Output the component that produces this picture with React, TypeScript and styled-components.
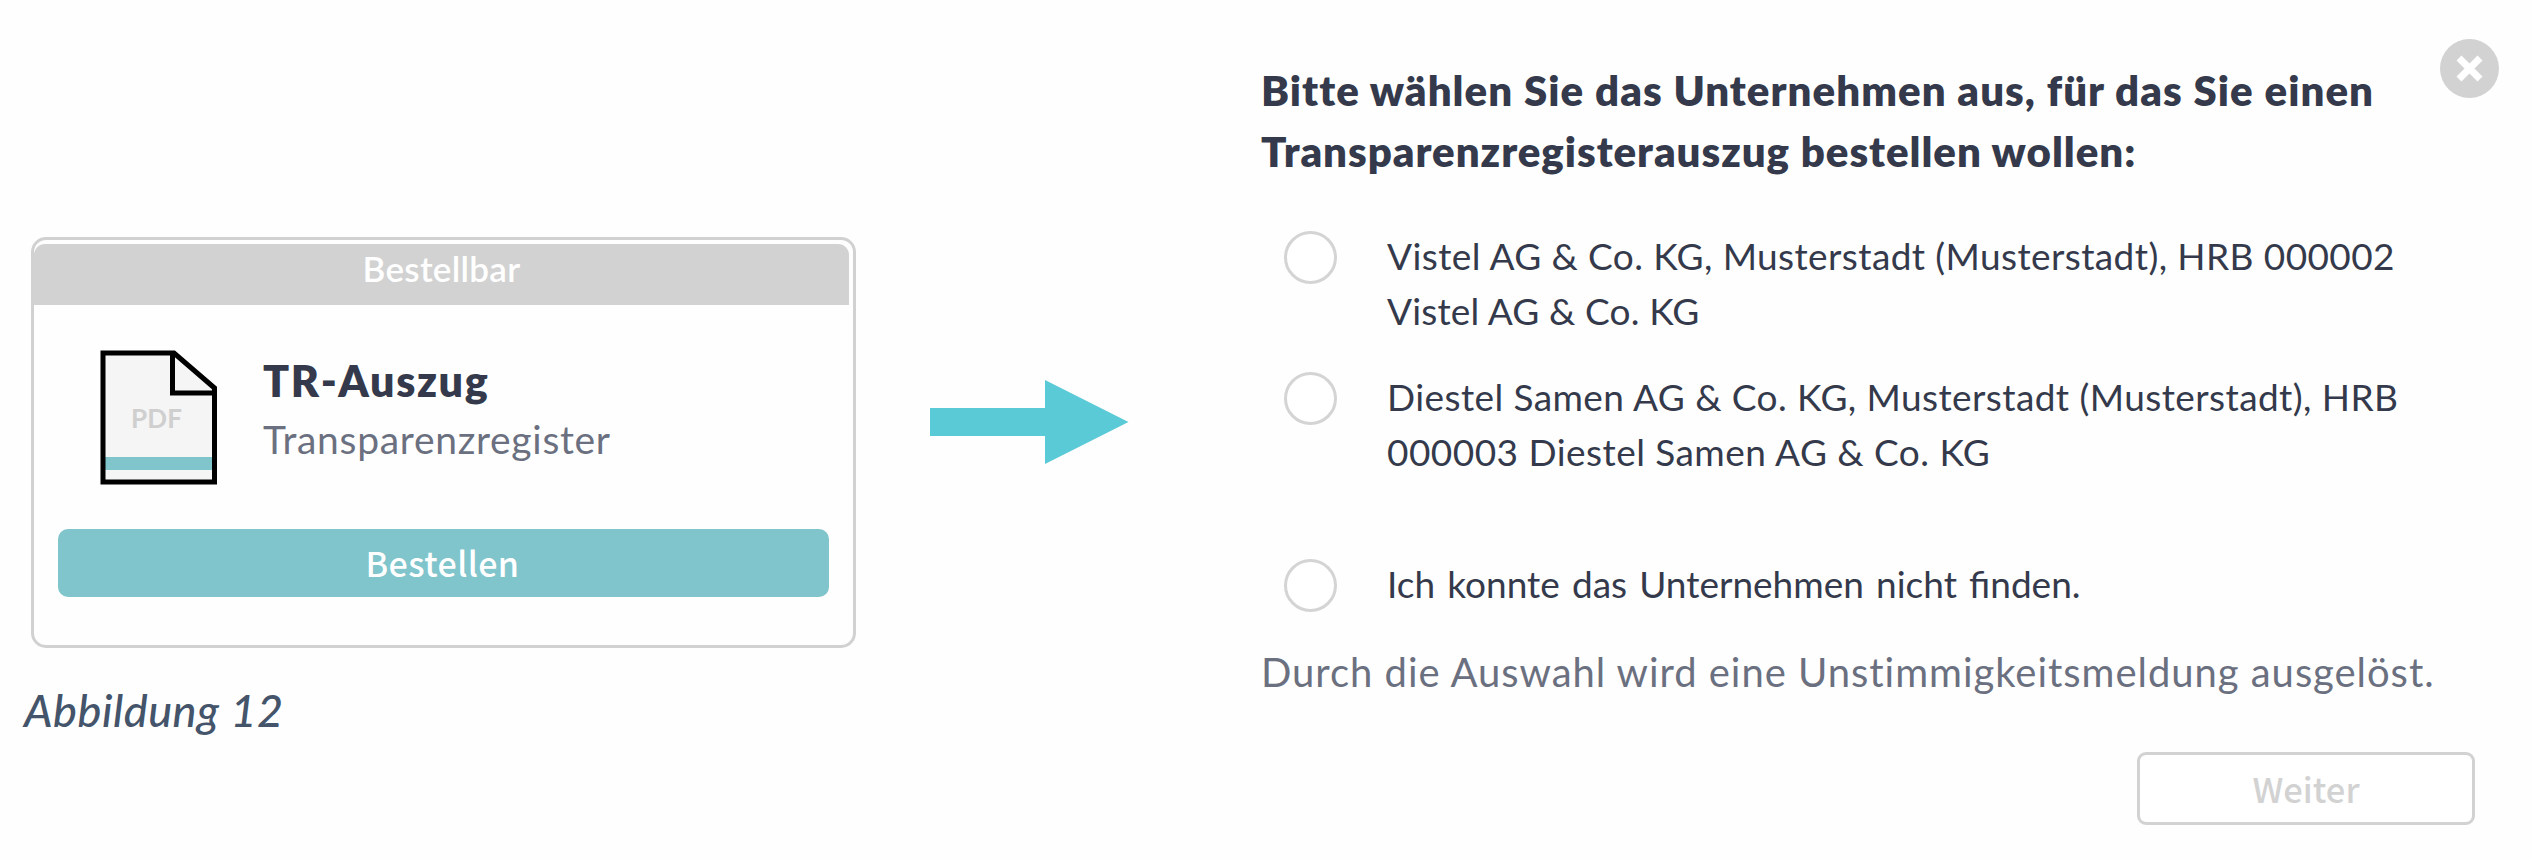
import React from 'react';
import styled, { createGlobalStyle } from 'styled-components';

const GlobalStyle = createGlobalStyle`
  *, *::before, *::after { box-sizing: border-box; }
  body { margin: 0; background: #fefefe; font-family: Lato, "Noto Sans", sans-serif; color: #343a4b; }
  h1, h2, p { margin: 0; font-weight: 400; }
  button { padding: 0; font: inherit; cursor: pointer; }
`;

const Page = styled.main`
  display: flex;
  width: 2532px;
  height: 860px;
  overflow: hidden;
`;

const Figure = styled.section`
  width: 930px;
  padding: 236.5px 0 0 31px;
`;

const Card = styled.article`
  width: 825px;
  height: 411px;
  border: 3px solid #d1d1d1;
  border-radius: 15px;
  padding: 4px 4px 0 0;
`;

const Status = styled.div`
  height: 61px;
  border-radius: 11px 11px 0 0;
  background: #d2d2d2;
  color: #fff;
  font-size: 35px;
  font-weight: 600;
  line-height: 49px;
  letter-spacing: 0.3px;
  text-align: center;
`;

const Product = styled.div`
  display: flex;
  gap: 45px;
  padding: 45px 0 0 66px;
  height: 224px;
`;

const ProductText = styled.div`
  padding-top: 6px;
`;

const ProductName = styled.h2`
  font-size: 43px;
  font-weight: 800;
  line-height: 50px;
  letter-spacing: 1.6px;
`;

const ProductKind = styled.p`
  padding-top: 8px;
  color: #6b7080;
  font-size: 39px;
  line-height: 51px;
  letter-spacing: 0.7px;
`;

const OrderButton = styled.button`
  display: block;
  width: 771px;
  height: 68px;
  margin-left: 24px;
  padding-right: 2px;
  border: 0;
  border-radius: 10px;
  background: #80c4cc;
  color: #fff;
  font-family: "Noto Sans CJK JP", sans-serif;
  font-size: 34px;
  font-weight: 500;
  line-height: 68px;
  letter-spacing: 0.4px;
`;

const Caption = styled.p`
  margin: 36px 0 0 -7px;
  color: #44546a;
  font-size: 45px;
  font-style: italic;
  font-weight: 500;
  line-height: 52px;
  letter-spacing: 0.5px;
`;

const ArrowSlot = styled.div`
  width: 331px;
  padding-top: 380px;
`;

const Dialog = styled.section`
  position: relative;
  width: 1271px;
  padding-top: 59.6px;
`;

const Title = styled.h1`
  font-size: 42px;
  font-weight: 800;
  line-height: 61.3px;
`;

const Line = styled.span<{ $spacing: number; $wordSpacing?: number }>`
  display: block;
  letter-spacing: ${p => p.$spacing}px;
  word-spacing: ${p => p.$wordSpacing ?? 0}px;
  white-space: nowrap;
`;

const CloseButton = styled.button`
  position: absolute;
  top: 38.5px;
  left: 1179px;
  display: grid;
  place-items: center;
  width: 59px;
  height: 59px;
  border: 0;
  border-radius: 50%;
  background: #d2d2d2;
`;

const Options = styled.div`
  padding: 45px 0 0 23px;
`;

const Option = styled.label<{ $height: number }>`
  display: flex;
  gap: 50px;
  height: ${p => p.$height}px;
`;

const Radio = styled.input`
  appearance: none;
  flex: none;
  width: 53px;
  height: 53px;
  margin: 4px 0 0;
  border: 3px solid #d4d4d4;
  border-radius: 50%;
  background: #fff;
`;

const OptionText = styled.span`
  padding-top: 0.5px;
  font-size: 37px;
  line-height: 55.6px;
`;

const Note = styled.p`
  padding-top: 3px;
  color: #6b7080;
  font-size: 40px;
  line-height: 57px;
`;

const NextButton = styled.button`
  display: block;
  width: 338px;
  height: 73px;
  margin: 50.5px 0 0 876px;
  border: 3px solid #d2d2d2;
  border-radius: 9px;
  background: #fff;
  color: #d2d2d2;
  font-family: "Noto Sans CJK JP", sans-serif;
  font-size: 34.5px;
  font-weight: 500;
  line-height: 67px;
`;

const PdfIcon = () => (
  <svg width="118" height="136" viewBox="0 0 118 136">
    <path d="M3 3H74L114.5 38V132H3Z" fill="#f5f5f5" />
    <path d="M3 107H114V120H3Z" fill="#80c4cc" />
    <path d="M3 3H74L114.5 38V132H3Z M72.500 3V43H114" fill="none" stroke="#000" strokeWidth="5" />
    <text x="31" y="77.500" fill="#cfcfcf" fontFamily="Lato" fontWeight="700" fontSize="26" textLength="51">PDF</text>
  </svg>
);

const Arrow = () => (
  <svg width="199" height="84" viewBox="0 0 199 84" fill="#5bcad7">
    <path d="M0 28H115V0L198.500 42L115 84V56H0Z" />
  </svg>
);

const Cross = () => (
  <svg width="27" height="27" viewBox="0 0 27 27" stroke="#fff" strokeWidth="7">
    <path d="M3 3L24 24M24 3L3 24" />
  </svg>
);

const options = [
  {
    height: 141,
    lines: [
      { text: 'Vistel AG & Co. KG, Musterstadt (Musterstadt), HRB 000002', spacing: 0.4 },
      { text: 'Vistel AG & Co. KG', spacing: 0.15 },
    ],
  },
  {
    height: 187,
    lines: [
      { text: 'Diestel Samen AG & Co. KG, Musterstadt (Musterstadt), HRB', spacing: 0.42 },
      { text: '000003 Diestel Samen AG & Co. KG', spacing: 0.46 },
    ],
  },
  { height: 86, lines: [{ text: 'Ich konnte das Unternehmen nicht finden.', spacing: 0, wordSpacing: 2.7 }] },
];

export default function App() {
  return (
    <Page>
      <GlobalStyle />
      <Figure>
        <Card>
          <Status>Bestellbar</Status>
          <Product>
            <PdfIcon />
            <ProductText>
              <ProductName>TR-Auszug</ProductName>
              <ProductKind>Transparenzregister</ProductKind>
            </ProductText>
          </Product>
          <OrderButton>Bestellen</OrderButton>
        </Card>
        <Caption>Abbildung 12</Caption>
      </Figure>
      <ArrowSlot>
        <Arrow />
      </ArrowSlot>
      <Dialog>
        <Title>
          <Line $spacing={1.04}>Bitte wählen Sie das Unternehmen aus, für das Sie einen</Line>
          <Line $spacing={0.96}>Transparenzregisterauszug bestellen wollen:</Line>
        </Title>
        <CloseButton aria-label="Schließen">
          <Cross />
        </CloseButton>
        <Options>
          {options.map(option => (
            <Option key={option.lines[0].text} $height={option.height}>
              <Radio type="radio" name="company" />
              <OptionText>
                {option.lines.map(line => (
                  <Line
                    key={line.text}
                    $spacing={line.spacing}
                    $wordSpacing={'wordSpacing' in line ? line.wordSpacing : 0}
                  >
                    {line.text}
                  </Line>
                ))}
              </OptionText>
            </Option>
          ))}
        </Options>
        <Note>
          <Line $spacing={0.96}>Durch die Auswahl wird eine Unstimmigkeitsmeldung ausgelöst.</Line>
        </Note>
        <NextButton>Weiter</NextButton>
      </Dialog>
    </Page>
  );
}
